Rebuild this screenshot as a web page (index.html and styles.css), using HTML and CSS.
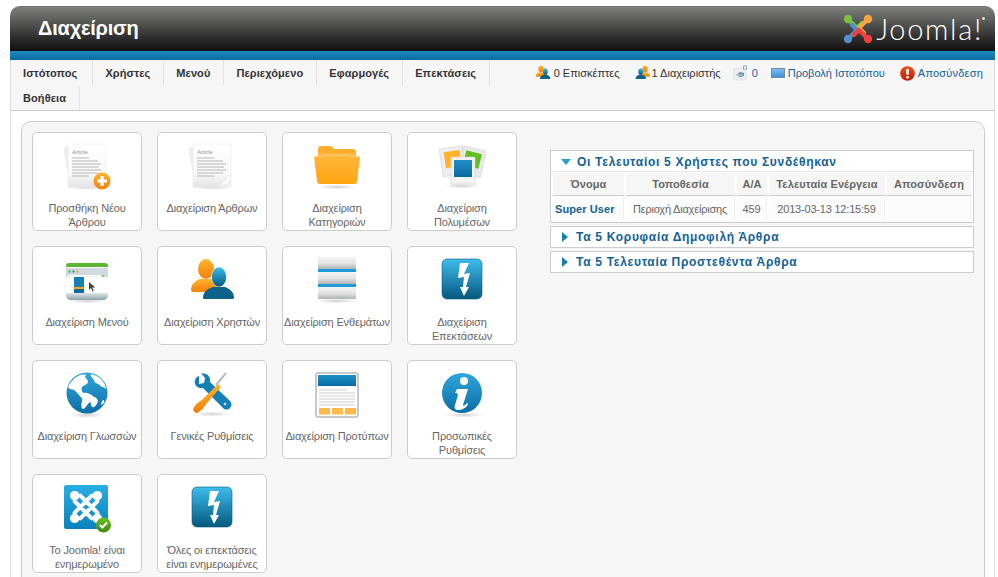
FILE: index.html
```html
<!DOCTYPE html>
<html lang="el">
<head>
<meta charset="utf-8">
<title>Διαχείριση</title>
<link rel="stylesheet" href="styles.css">
</head>
<body>
<svg class="sprite" aria-hidden="true">
  <defs>
    <linearGradient id="gPaper" x1="0" y1="0" x2="0" y2="1"><stop offset="0" stop-color="#fff"/><stop offset=".7" stop-color="#f8f8f8"/><stop offset="1" stop-color="#e4e4e4"/></linearGradient>
    <linearGradient id="gOrange" x1="0" y1="0" x2="0" y2="1"><stop offset="0" stop-color="#ffb52e"/><stop offset="1" stop-color="#f57f06"/></linearGradient>
    <linearGradient id="gFolder" x1="0" y1="0" x2="0" y2="1"><stop offset="0" stop-color="#ffb63c"/><stop offset="1" stop-color="#ffa50f"/></linearGradient>
    <linearGradient id="gBlue" x1="0" y1="0" x2="0" y2="1"><stop offset="0" stop-color="#3dbdec"/><stop offset="1" stop-color="#04587e"/></linearGradient>
    <linearGradient id="gGlobe" x1="0" y1="0" x2="0" y2="1"><stop offset="0" stop-color="#2fa6dd"/><stop offset="1" stop-color="#0b6ea6"/></linearGradient>
    <linearGradient id="gJoom" x1="0" y1="0" x2="0" y2="1"><stop offset="0" stop-color="#27aee3"/><stop offset="1" stop-color="#0a82bd"/></linearGradient>
    <linearGradient id="gGreen" x1="0" y1="0" x2="0" y2="1"><stop offset="0" stop-color="#6cc024"/><stop offset="1" stop-color="#3d8a0c"/></linearGradient>
    <linearGradient id="gSteel" x1="0" y1="0" x2="0" y2="1"><stop offset="0" stop-color="#f4f4f4"/><stop offset=".55" stop-color="#e2e2e2"/><stop offset="1" stop-color="#aeb2b2"/></linearGradient>
    <linearGradient id="gBase" x1="0" y1="0" x2="0" y2="1"><stop offset="0" stop-color="#dfe6e8"/><stop offset="1" stop-color="#8ea2a8"/></linearGradient>
    <linearGradient id="gMon" x1="0" y1="0" x2="0" y2="1"><stop offset="0" stop-color="#7cc0f2"/><stop offset="1" stop-color="#3c8fd8"/></linearGradient>
    <linearGradient id="gRed" x1="0" y1="0" x2="0" y2="1"><stop offset="0" stop-color="#ee4a1c"/><stop offset="1" stop-color="#bd1f05"/></linearGradient>
    <linearGradient id="gBar" x1="0" y1="0" x2="0" y2="1"><stop offset="0" stop-color="#1d91c8"/><stop offset="1" stop-color="#0b6aa0"/></linearGradient>
    <radialGradient id="gShadow"><stop offset="0" stop-color="#000" stop-opacity=".18"/><stop offset="1" stop-color="#000" stop-opacity="0"/></radialGradient>

    <symbol id="i-users" viewBox="0 0 48 48">
      <ellipse cx="18" cy="12" rx="8" ry="10" fill="url(#gOrange)"/>
      <path d="M3 33c0-6 4-9 9-11h12c5 2 9 5 9 11 0 1-2 2-3 2H6c-2 0-3-1-3-2z" fill="url(#gOrange)"/>
      <ellipse cx="31" cy="20" rx="7.500" ry="10" fill="url(#gBlue)" stroke="#fff" stroke-width=".5"/>
      <path d="M15 41c0-6 4-9 10-11h12c5 2 9 5 9 11 0 1-2 1-3 1H18c-2 0-3 0-3-1z" fill="#0c6288"/>
    </symbol>

    <symbol id="i-bolt" viewBox="0 0 48 48">
      <rect x="4" y="2" width="40" height="40" rx="5" fill="url(#gBlue)" stroke="#0b5d80" stroke-width=".6"/>
      <path d="M22 6h9l-5 11 6-1-4 14h3l-5 9-4-9h3l1-10-6 1z" fill="#fff"/>
    </symbol>

    <symbol id="i-mark" viewBox="0 0 30 30">
      <g fill="none" stroke-width="4.200" stroke-linecap="round" stroke-linejoin="round">
        <path d="M5 5 L14 14 L19 9" stroke="#7ac143"/>
        <path d="M25 5 L16 14 L21 19" stroke="#f9a541"/>
        <path d="M5 25 L14 16 L9 11" stroke="#5091cd"/>
        <path d="M25 25 L16 16 L11 21" stroke="#ee3f3e"/>
      </g>
      <circle cx="5" cy="5" r="4.200" fill="#7ac143"/>
      <circle cx="25" cy="5" r="4.200" fill="#f9a541"/>
      <circle cx="5" cy="25" r="4.200" fill="#5091cd"/>
      <circle cx="25" cy="25" r="4.200" fill="#ee3f3e"/>
    </symbol>

    <symbol id="i-article" viewBox="0 0 48 48">
      <ellipse cx="24" cy="44" rx="21" ry="3" fill="url(#gShadow)"/>
      <path d="M1 6 6 3l3 38-2 0z" fill="#eee" stroke="#e2e2e2" stroke-width=".5"/>
      <rect x="5" y="1" width="38" height="43" fill="url(#gPaper)" stroke="#ececec" stroke-width=".6"/>
      <text class="svg-article" x="9" y="11">Article</text>
      <g stroke="#a4a4a4" stroke-width=".8">
        <path d="M9 15h17M9 18h26M9 21h29M9 24h27M9 27h29M9 30h26M9 33h17"/>
      </g>
      <path d="M43 32c-3 4-7 6-12 12h12z" fill="#eee"/>
      <path d="M43 32c-1 5-2 8-4 9-2 0-5 1-8 3 4-4 8-8 12-12z" fill="#fff" stroke="#ddd" stroke-width=".4"/>
    </symbol>

    <symbol id="i-globe" viewBox="0 0 48 48">
      <ellipse cx="24" cy="44" rx="18" ry="3" fill="url(#gShadow)"/>
      <circle cx="24" cy="22" r="20.500" fill="url(#gGlobe)"/>
      <path d="M17 4c-5 2-10 7-12 12 2 3 4 2 6 3 2 1 3 3 5 5 2 3 4 3 3 6-1 4-1 7 1 8 2 0 3-3 5-5 2-2 5-5 5-8-2-1-5-4-8-3-3 0-4-3-3-6 2-2 5-2 6-5 0-3-2-3-3-5l1-2c-2-1-4 0-6 0z" fill="#fff"/>
      <path d="M28 3c-1 2 1 3 2 5 2 1 1 4 3 4 2 1 5 2 5 4 2-1 3 1 5 2-1-7-6-13-15-15z" fill="#fff"/>
      <path d="M27 26c3-1 6 0 7 2 2 2 0 6-3 8-2 1-3-1-3-3-1-2-2-5-1-7zM40 29c1 0 2 1 1 3l-3 2c0-2 1-4 2-5z" fill="#fff"/>
    </symbol>
  </defs>
</svg>

<div class="page">
  <header class="topbar">
    <h1 class="title">Διαχείριση</h1>
    <div class="logo">
      <svg class="logo-mark"><use href="#i-mark"/></svg>
      <span class="logo-text">Joomla!</span><span class="logo-reg"></span>
    </div>
  </header>
  <div class="strip"></div>

  <div class="submenu">
    <ul class="nav">
      <li>Ιστότοπος</li><li>Χρήστες</li><li>Μενού</li><li>Περιεχόμενο</li><li>Εφαρμογές</li><li>Επεκτάσεις</li><li>Βοήθεια</li>
    </ul>
    <div class="status">
      <span class="stat guests"><svg class="ico16"><use href="#i-users"/></svg>0 Επισκέπτες</span>
      <span class="stat admins"><svg class="ico16 flip"><use href="#i-users"/></svg>1 Διαχειριστής</span>
      <span class="stat msg link">
        <svg class="ico16" viewBox="0 0 16 16">
          <rect x=".5" y="3" width="13" height="12" rx="2" fill="#e9edf0" stroke="#dde1e4" stroke-width=".6"/>
          <path d="M3 10l4-3 4 1v3l-4 1z" fill="#6d8ea5"/>
          <path d="M4 10h6" stroke="#fff" stroke-width=".7"/>
          <rect x="10.500" y="1" width="3" height="3" fill="#fff" stroke="#5d9cc4" stroke-width=".8"/>
        </svg>0</span>
      <span class="stat view link">
        <svg class="ico14" viewBox="0 0 14 10"><rect x=".5" y=".5" width="13" height="9" fill="url(#gMon)" stroke="#7a8b99"/></svg>Προβολή Ιστοτόπου</span>
      <span class="stat logout link">
        <svg class="ico15" viewBox="0 0 16 16"><circle cx="8" cy="8" r="7.800" fill="url(#gRed)"/><rect x="6.600" y="3" width="2.800" height="6.600" rx="1" fill="#fff"/><rect x="6.600" y="10.600" width="2.800" height="2.600" rx=".8" fill="#fff"/></svg>Αποσύνδεση</span>
    </div>
  </div>

  <main class="content">
    <section class="panel">
      <div class="quick">
        <a class="qbtn">
          <svg class="qicon" viewBox="0 0 48 48"><use href="#i-article"/><circle cx="39" cy="38" r="8.500" fill="url(#gOrange)"/><path d="M39 33v10M34 38h10" stroke="#fff" stroke-width="3.200"/></svg>
          <span class="qlabel">Προσθήκη Νέου Άρθρου</span>
        </a>
        <a class="qbtn">
          <svg class="qicon" viewBox="0 0 48 48"><use href="#i-article"/></svg>
          <span class="qlabel">Διαχείριση Άρθρων</span>
        </a>
        <a class="qbtn">
          <svg class="qicon" viewBox="0 0 48 48">
            <ellipse cx="24" cy="44" rx="20" ry="2.500" fill="url(#gShadow)"/>
            <path d="M5 24V6c0-2 1-3 3-3h9c2 0 3 1 4 3h19c2 0 3 1 3 3v15z" fill="#ffae2b"/>
            <path d="M5 11h38" stroke="#ffc35e" stroke-width="1"/>
            <path d="M1 14c12-2 34-2 46 0l-3 24c0 2-1 3-3 3H7c-2 0-3-1-3-3z" fill="url(#gFolder)"/>
            <path d="M1 14c12-2 34-2 46 0" fill="none" stroke="#ffd07e" stroke-width="1"/>
          </svg>
          <span class="qlabel">Διαχείριση Κατηγοριών</span>
        </a>
        <a class="qbtn">
          <svg class="qicon" viewBox="0 0 48 48">
            <g transform="rotate(14 34 18)"><rect x="22" y="5" width="24" height="27" fill="#e9e9e9" stroke="#d5d5d5" stroke-width=".6"/><rect x="26" y="9" width="16" height="15" fill="#5fc01e"/></g>
            <g transform="rotate(-8 16 18)"><rect x="3" y="4" width="23" height="28" fill="#eee" stroke="#d5d5d5" stroke-width=".6"/><rect x="7" y="8" width="16" height="16" fill="#ffb32a"/></g>
            <ellipse cx="24" cy="43" rx="18" ry="2.500" fill="url(#gShadow)"/>
            <rect x="13" y="14" width="24" height="27" fill="#f4f4f4" stroke="#cfcfcf" stroke-width=".6"/>
            <rect x="16" y="17" width="18" height="17" fill="url(#gBar)"/>
          </svg>
          <span class="qlabel">Διαχείριση Πολυμέσων</span>
        </a>

        <a class="qbtn">
          <svg class="qicon" viewBox="0 0 48 48">
            <ellipse cx="24" cy="44" rx="20" ry="2.500" fill="url(#gShadow)"/>
            <path d="M3 9c0-2 1-3 3-3h36c2 0 3 1 3 3v2H3z" fill="#5cb531"/>
            <rect x="3" y="10" width="42" height="26" fill="#fff"/>
            <rect x="3" y="11" width="42" height="9" fill="#cfdadf"/>
            <rect x="5" y="18" width="33" height="1.600" fill="#fff"/>
            <rect x="39" y="18" width="2" height="1.600" fill="#8cc152"/>
            <circle cx="6.500" cy="14.500" r="1.200" fill="#6fb53c"/><circle cx="10.500" cy="14.500" r="1.200" fill="#2b9ccf"/><circle cx="14.500" cy="14.500" r="1.200" fill="#f5a623"/>
            <rect x="11" y="20" width="10" height="10" fill="#157fb5"/>
            <rect x="11" y="30" width="10" height="2" fill="#f7a81c"/>
            <rect x="11" y="32" width="10" height="6" fill="#0e6a9c"/>
            <path d="M26 25v8l2-2 1.500 3.500 1.300-.6-1.500-3.400h3z" fill="#444"/>
            <path d="M3 36h42v2c0 3-2 5-5 5H8c-3 0-5-2-5-5z" fill="url(#gBase)"/>
          </svg>
          <span class="qlabel">Διαχείριση Μενού</span>
        </a>
        <a class="qbtn">
          <svg class="qicon" viewBox="0 0 48 48"><use href="#i-users"/></svg>
          <span class="qlabel">Διαχείριση Χρηστών</span>
        </a>
        <a class="qbtn">
          <svg class="qicon" viewBox="0 0 48 48">
            <ellipse cx="24" cy="44" rx="22" ry="2.500" fill="url(#gShadow)"/>
            <rect x="5" y="12" width="38" height="3" fill="#1e9ad8"/>
            <rect x="5" y="27" width="38" height="3" fill="#1e9ad8"/>
            <rect x="5" y="0" width="38" height="12" rx="1" fill="url(#gSteel)"/>
            <rect x="5" y="15" width="38" height="12" rx="1" fill="url(#gSteel)"/>
            <rect x="5" y="30" width="38" height="12" rx="1" fill="url(#gSteel)"/>
          </svg>
          <span class="qlabel">Διαχείριση Ενθεμάτων</span>
        </a>
        <a class="qbtn">
          <svg class="qicon" viewBox="0 0 48 48"><use href="#i-bolt"/></svg>
          <span class="qlabel">Διαχείριση Επεκτάσεων</span>
        </a>

        <a class="qbtn">
          <svg class="qicon" viewBox="0 0 48 48"><use href="#i-globe"/></svg>
          <span class="qlabel">Διαχείριση Γλωσσών</span>
        </a>
        <a class="qbtn">
          <svg class="qicon" viewBox="0 0 48 48">
            <ellipse cx="24" cy="43" rx="18" ry="2.500" fill="url(#gShadow)"/>
            <path d="M38 2l-10 12" stroke="#b6bcc0" stroke-width="2"/>
            <path d="M10 4c-3 1-5 4-4 8 1 3 5 5 8 4l20 20c2 2 5 2 7 0s2-5 0-7L21 10c1-3-1-7-4-8l-5-1 4 5-1 5-5 1z" fill="#1481b6" transform="translate(1 1)"/>
            <path d="M30 13l3 3-15 17c-2 4-5 7-9 9-2 0-4-2-4-4 2-4 5-7 9-9z" fill="url(#gOrange)"/>
            <circle cx="37" cy="33" r="1.300" fill="#bde3f5"/>
          </svg>
          <span class="qlabel">Γενικές Ρυθμίσεις</span>
        </a>
        <a class="qbtn">
          <svg class="qicon" viewBox="0 0 48 48">
            <rect x="3" y="2" width="42" height="44" rx="2" fill="#fff" stroke="#c8c8c8" stroke-width="2"/>
            <rect x="5" y="4" width="38" height="11" fill="url(#gBar)"/>
            <g stroke="#b8b8b8" stroke-width=".7"><path d="M6 19h28M6 22h36M6 25h36M6 28h36M6 31h36M6 34h36"/></g>
            <rect x="6" y="37" width="11" height="6.500" fill="#fdb94a"/><rect x="19" y="37" width="11" height="6.500" fill="#fdb94a"/><rect x="32" y="37" width="11" height="6.500" fill="#fdb94a"/>
          </svg>
          <span class="qlabel">Διαχείριση Προτύπων</span>
        </a>
        <a class="qbtn">
          <svg class="qicon" viewBox="0 0 48 48">
            <ellipse cx="26" cy="44" rx="20" ry="2.500" fill="url(#gShadow)"/>
            <circle cx="24" cy="22" r="20" fill="url(#gGlobe)"/>
            <circle cx="26" cy="10" r="4" fill="#fff"/>
            <path d="M19 18h11l-5 16c0 1 1 1 2 0l2-2 1 1c-2 4-6 6-10 6-3 0-4-2-3-5l3-10c0-2-2-2-3-2z" fill="#fff"/>
          </svg>
          <span class="qlabel">Προσωπικές Ρυθμίσεις</span>
        </a>

        <a class="qbtn">
          <svg class="qicon" viewBox="0 0 48 48">
            <rect x="1" y="0" width="44" height="44" rx="2" fill="url(#gJoom)"/>
            <svg x="6" y="5" width="34" height="34" viewBox="0 0 30 30">
              <g fill="none" stroke="#fff" stroke-width="3.600" stroke-linecap="round">
                <path d="M10 5 25 20M5 10 20 25M20 5 5 20M25 10 10 25"/>
              </g>
              <circle cx="5" cy="5" r="4.200" fill="#fff"/><circle cx="25" cy="5" r="4.200" fill="#fff"/><circle cx="5" cy="25" r="4.200" fill="#fff"/><circle cx="25" cy="25" r="4.200" fill="#fff"/>
            </svg>
            <circle cx="40.500" cy="40" r="7.500" fill="url(#gGreen)"/>
            <path d="M37 40l2.500 2.500 4.500-5" fill="none" stroke="#fff" stroke-width="2"/>
          </svg>
          <span class="qlabel">Το Joomla! είναι ενημερωμένο</span>
        </a>
        <a class="qbtn">
          <svg class="qicon" viewBox="0 0 48 48"><use href="#i-bolt"/></svg>
          <span class="qlabel">Όλες οι επεκτάσεις είναι ενημερωμένες</span>
        </a>
      </div>

      <div class="sliders">
        <div class="slider">
          <h3 class="slider-title first"><span class="arrow down"></span>Οι Τελευταίοι 5 Χρήστες που Συνδέθηκαν</h3>
          <table class="logged">
            <colgroup><col class="c1"><col class="c2"><col class="c3"><col class="c4"><col class="c5"></colgroup>
            <thead><tr><th>Όνομα</th><th>Τοποθεσία</th><th>Α/Α</th><th>Τελευταία Ενέργεια</th><th>Αποσύνδεση</th></tr></thead>
            <tbody><tr><td class="uname">Super User</td><td>Περιοχή Διαχείρισης</td><td>459</td><td>2013-03-13 12:15:59</td><td></td></tr></tbody>
          </table>
        </div>
        <div class="slider">
          <h3 class="slider-title"><span class="arrow right"></span>Τα 5 Κορυφαία Δημοφιλή Άρθρα</h3>
        </div>
        <div class="slider">
          <h3 class="slider-title"><span class="arrow right"></span>Τα 5 Τελευταία Προστεθέντα Άρθρα</h3>
        </div>
      </div>
    </section>
  </main>
</div>
</body>
</html>
```

FILE: styles.css
```css
* { box-sizing: border-box; }
html, body { height: 100%; overflow: hidden; }
body {
  margin: 0;
  padding: 6px 3px 0 10px;
  background: #fff;
  font-family: "Liberation Sans", Arial, sans-serif;
  font-size: 11px;
  color: #666;
}
.sprite { position: absolute; width: 0; height: 0; overflow: hidden; }
.page { width: 985px; height: 571px; overflow: hidden; }

.topbar {
  height: 45px;
  display: flex;
  align-items: center;
  justify-content: space-between;
  padding: 0 12px 0 28px;
  border-radius: 10px 10px 0 0;
  border-top: 1px solid #707070;
  background: linear-gradient(#7d7e7a 0, #5c5d5a 30%, #333 65%, #0f0f0f 100%);
}
.title {
  margin: 0 0 1px;
  font-size: 20px;
  letter-spacing: -.2px;
  font-weight: bold;
  color: #fff;
}
.logo { display: flex; align-items: center; position: relative; }
.logo-mark { width: 30px; height: 30px; margin-right: 3px; }
.logo-text {
  font-family: Lato, sans-serif;
  font-weight: 300;
  font-size: 29px;
  letter-spacing: 1.700px;
  line-height: 30px;
  color: #fff;
}
.logo-reg {
  position: absolute;
  top: 3px;
  right: -2px;
  width: 3px;
  height: 3px;
  border-radius: 50%;
  background: #ddd;
}
.strip { height: 9px; background: linear-gradient(#1c8cc2, #0a6a9e); }

.submenu {
  height: 51px;
  display: flex;
  justify-content: space-between;
  align-items: flex-start;
  background: #f6f6f6;
  border-bottom: 1px solid #ccc;
  border-left: 1px solid #ddd;
  border-right: 1px solid #ddd;
}
.nav {
  display: flex;
  flex-wrap: wrap;
  width: 500px;
  margin: 0;
  padding: 0;
  list-style: none;
}
.nav li {
  height: 26px;
  padding: 0 13px 0 12px;
  line-height: 26px;
  font-weight: bold;
  letter-spacing: .1px;
  color: #333;
  border-right: 1px solid #e2e2e2;
}
.nav li:first-child { padding-right: 15px; }
.nav li:nth-child(7) { height: 24px; line-height: 24px; }
.status {
  display: flex;
  gap: 14px;
  height: 26px;
  padding-right: 11px;
  align-items: center;
  color: #333;
}
.stat { display: flex; align-items: center; gap: 3px; }
.link { color: #146295; }
.admins { margin-left: 1px; gap: 1px; }
.msg { margin-left: -2px; }
.view { margin-left: -1px; }
.logout { margin-left: 1px; letter-spacing: .2px; }
.ico16 { width: 16px; height: 16px; }
.flip { transform: scaleX(-1); }
.ico14 { width: 14px; height: 10px; }
.ico15 { width: 15px; height: 15px; }

.content {
  height: 470px;
  padding: 10px 9px 0 10px;
  border-left: 1px solid #ddd;
  border-right: 1px solid #ddd;
}
.panel {
  height: 500px;
  display: flex;
  padding: 10px 10px 0;
  background: #f6f6f6;
  border: 1px solid #ccc;
  border-radius: 10px;
}
.quick {
  display: grid;
  grid-template-columns: repeat(4, 110px);
  grid-auto-rows: 99px;
  gap: 15px;
  align-content: start;
}
.qbtn {
  display: flex;
  flex-direction: column;
  align-items: center;
  padding: 10px 0 0;
  background: #fff;
  border: 1px solid #ccc;
  border-radius: 5px;
  color: #666;
  text-align: center;
  line-height: 14px;
  letter-spacing: -.15px;
  overflow: hidden;
}
.qicon { width: 48px; height: 48px; flex: none; margin-bottom: 10px; }
.svg-article { font-family: "Liberation Sans", Arial, sans-serif; font-size: 6px; fill: #999; }

.sliders {
  width: 424px;
  margin: 18px 0 0 33px;
  display: flex;
  flex-direction: column;
  gap: 3px;
}
.slider { background: #fff; border: 1px solid #ccc; }
.slider-title {
  display: flex;
  align-items: center;
  height: 20px;
  margin: 0;
  padding-left: 10px;
  font-size: 12px;
  font-weight: bold;
  letter-spacing: .7px;
  color: #146295;
}
.slider-title.first { padding-top: 2px; }
.arrow { flex: none; margin-right: 6px; width: 0; height: 0; }
.arrow.down { border-left: 5px solid transparent; border-right: 5px solid transparent; border-top: 6px solid #2b9ccb; }
.arrow.right { margin: 0 8px 0 1px; border-top: 5px solid transparent; border-bottom: 5px solid transparent; border-left: 6px solid #1a7fae; }

.logged {
  width: 422px;
  table-layout: fixed;
  border-collapse: separate;
  border-spacing: 2px 1px;
  font-size: 11px;
  background: #fff;
  border-top: 1px solid #e4e4e4;
}
.c1 { width: 71px; }
.c2 { width: 109px; }
.c3 { width: 30px; }
.c4 { width: 116px; }
.c5 { width: 84px; }
.logged th {
  height: 23px;
  padding: 0;
  background: #f6f6f6;
  border-bottom: 1px solid #ccc;
  font-weight: bold;
  color: #666;
  letter-spacing: .1px;
}
.logged td {
  height: 24px;
  padding: 0;
  text-align: center;
  background: #fcfcfc;
  color: #666;
  border-right: 1px solid #f0f0f0;
  letter-spacing: -.2px;
}
.logged td.uname { font-weight: bold; color: #146295; text-align: left; padding-left: 2px; letter-spacing: .1px; }
```
